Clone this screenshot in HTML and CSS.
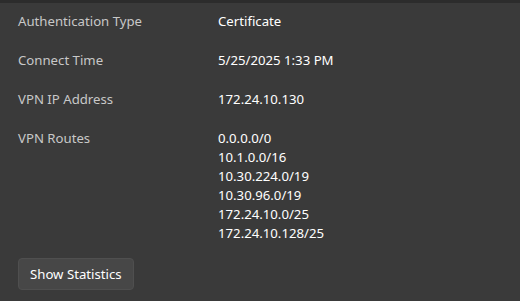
FILE: index.html
```html
<!DOCTYPE html>
<html>
<head>
<meta charset="utf-8">
<link rel="stylesheet" href="styles.css">
</head>
<body>
<div class="topbar"></div>
<div class="panel">
  <div class="row"><div class="label">Authentication Type</div><div class="value">Certificate</div></div>
  <div class="row"><div class="label">Connect Time</div><div class="value">5/25/2025 1:33 PM</div></div>
  <div class="row"><div class="label">VPN IP Address</div><div class="value">172.24.10.130</div></div>
  <div class="row"><div class="label">VPN Routes</div>
    <div class="value">
      <div>0.0.0.0/0</div>
      <div>10.1.0.0/16</div>
      <div>10.30.224.0/19</div>
      <div>10.30.96.0/19</div>
      <div>172.24.10.0/25</div>
      <div>172.24.10.128/25</div>
    </div>
  </div>
  <button class="btn">Show Statistics</button>
</div>
</body>
</html>
```
FILE: styles.css
```css
html, body { margin: 0; padding: 0; }
body {
  width: 520px; height: 301px; overflow: hidden;
  background: #3a3a3a;
  font-family: "Noto Sans", "Open Sans", sans-serif;
  font-size: 13.2px;
}
.topbar { height: 3px; background: #2c2c2c; }
.panel {
  padding: 9px 18px 0 18px;
  display: flex; flex-direction: column; gap: 20px;
  align-items: flex-start;
}
.row { display: flex; line-height: 19px; }
.label { width: 200px; color: #c8c8c8; }
.value { color: #ffffff; }
.btn {
  margin-top: -5px;
  height: 32px;
  padding: 0 11px;
  background: #474747;
  border: 1px solid #4f4f4f;
  border-radius: 4px;
  color: #ffffff;
  font-family: inherit;
  font-size: 13.2px;
}
```
